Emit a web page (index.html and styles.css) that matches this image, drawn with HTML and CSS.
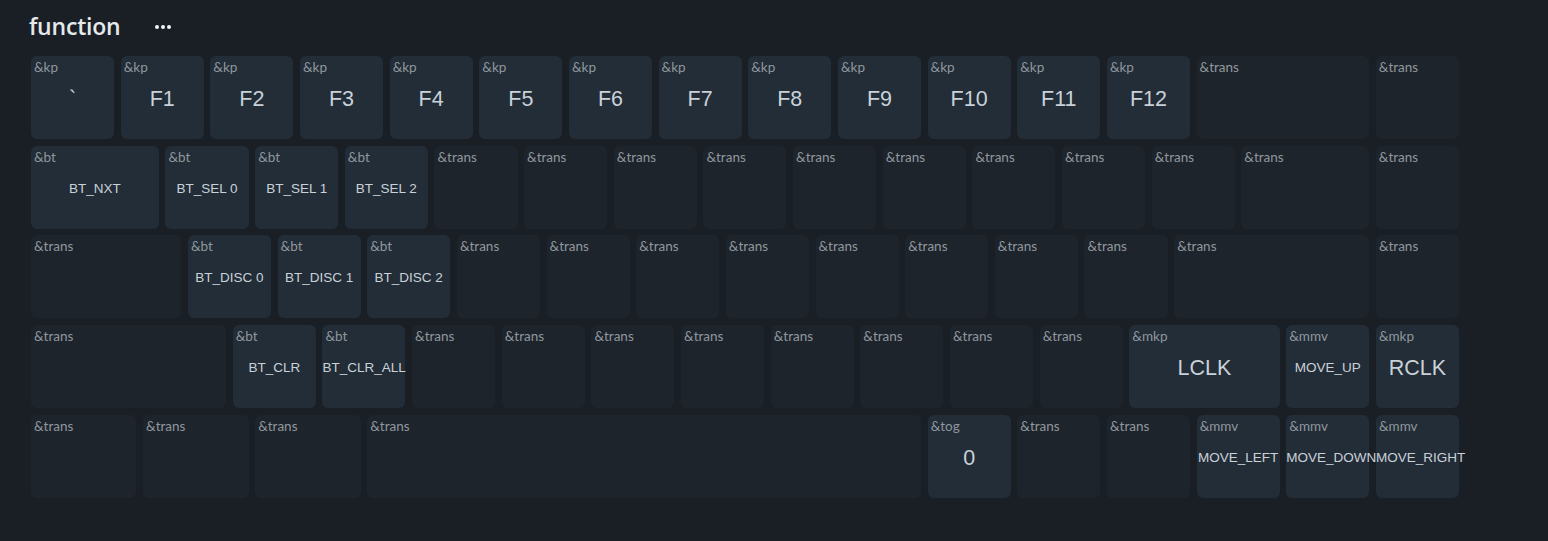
FILE: index.html
```html
<!DOCTYPE html>
<html>
<head>
<meta charset="utf-8">
<link rel="stylesheet" href="styles.css">
</head>
<body>
<div class="page">
  <div class="header">
    <h1 class="title">function</h1>
    <span class="more"><i></i><i></i><i></i></span>
  </div>
  <div class="keyboard">
    <div class="row">
      <div class="key on u1"><span class="beh">&amp;kp</span><span class="lbl big">`</span></div>
      <div class="key on u1"><span class="beh">&amp;kp</span><span class="lbl big">F1</span></div>
      <div class="key on u1"><span class="beh">&amp;kp</span><span class="lbl big">F2</span></div>
      <div class="key on u1"><span class="beh">&amp;kp</span><span class="lbl big">F3</span></div>
      <div class="key on u1"><span class="beh">&amp;kp</span><span class="lbl big">F4</span></div>
      <div class="key on u1"><span class="beh">&amp;kp</span><span class="lbl big">F5</span></div>
      <div class="key on u1"><span class="beh">&amp;kp</span><span class="lbl big">F6</span></div>
      <div class="key on u1"><span class="beh">&amp;kp</span><span class="lbl big">F7</span></div>
      <div class="key on u1"><span class="beh">&amp;kp</span><span class="lbl big">F8</span></div>
      <div class="key on u1"><span class="beh">&amp;kp</span><span class="lbl big">F9</span></div>
      <div class="key on u1"><span class="beh">&amp;kp</span><span class="lbl big">F10</span></div>
      <div class="key on u1"><span class="beh">&amp;kp</span><span class="lbl big">F11</span></div>
      <div class="key on u1"><span class="beh">&amp;kp</span><span class="lbl big">F12</span></div>
      <div class="key u2"><span class="beh">&amp;trans</span></div>
      <div class="key u1"><span class="beh">&amp;trans</span></div>
    </div>
    <div class="row">
      <div class="key on u15"><span class="beh">&amp;bt</span><span class="lbl">BT_NXT</span></div>
      <div class="key on u1"><span class="beh">&amp;bt</span><span class="lbl">BT_SEL 0</span></div>
      <div class="key on u1"><span class="beh">&amp;bt</span><span class="lbl">BT_SEL 1</span></div>
      <div class="key on u1"><span class="beh">&amp;bt</span><span class="lbl">BT_SEL 2</span></div>
      <div class="key u1"><span class="beh">&amp;trans</span></div>
      <div class="key u1"><span class="beh">&amp;trans</span></div>
      <div class="key u1"><span class="beh">&amp;trans</span></div>
      <div class="key u1"><span class="beh">&amp;trans</span></div>
      <div class="key u1"><span class="beh">&amp;trans</span></div>
      <div class="key u1"><span class="beh">&amp;trans</span></div>
      <div class="key u1"><span class="beh">&amp;trans</span></div>
      <div class="key u1"><span class="beh">&amp;trans</span></div>
      <div class="key u1"><span class="beh">&amp;trans</span></div>
      <div class="key u15"><span class="beh">&amp;trans</span></div>
      <div class="key u1"><span class="beh">&amp;trans</span></div>
    </div>
    <div class="row">
      <div class="key u175"><span class="beh">&amp;trans</span></div>
      <div class="key on u1"><span class="beh">&amp;bt</span><span class="lbl">BT_DISC 0</span></div>
      <div class="key on u1"><span class="beh">&amp;bt</span><span class="lbl">BT_DISC 1</span></div>
      <div class="key on u1"><span class="beh">&amp;bt</span><span class="lbl">BT_DISC 2</span></div>
      <div class="key u1"><span class="beh">&amp;trans</span></div>
      <div class="key u1"><span class="beh">&amp;trans</span></div>
      <div class="key u1"><span class="beh">&amp;trans</span></div>
      <div class="key u1"><span class="beh">&amp;trans</span></div>
      <div class="key u1"><span class="beh">&amp;trans</span></div>
      <div class="key u1"><span class="beh">&amp;trans</span></div>
      <div class="key u1"><span class="beh">&amp;trans</span></div>
      <div class="key u1"><span class="beh">&amp;trans</span></div>
      <div class="key u225"><span class="beh">&amp;trans</span></div>
      <div class="key u1"><span class="beh">&amp;trans</span></div>
    </div>
    <div class="row">
      <div class="key u225"><span class="beh">&amp;trans</span></div>
      <div class="key on u1"><span class="beh">&amp;bt</span><span class="lbl">BT_CLR</span></div>
      <div class="key on u1"><span class="beh">&amp;bt</span><span class="lbl">BT_CLR_ALL</span></div>
      <div class="key u1"><span class="beh">&amp;trans</span></div>
      <div class="key u1"><span class="beh">&amp;trans</span></div>
      <div class="key u1"><span class="beh">&amp;trans</span></div>
      <div class="key u1"><span class="beh">&amp;trans</span></div>
      <div class="key u1"><span class="beh">&amp;trans</span></div>
      <div class="key u1"><span class="beh">&amp;trans</span></div>
      <div class="key u1"><span class="beh">&amp;trans</span></div>
      <div class="key u1"><span class="beh">&amp;trans</span></div>
      <div class="key on u175"><span class="beh">&amp;mkp</span><span class="lbl big">LCLK</span></div>
      <div class="key on u1"><span class="beh">&amp;mmv</span><span class="lbl">MOVE_UP</span></div>
      <div class="key on u1"><span class="beh">&amp;mkp</span><span class="lbl big">RCLK</span></div>
    </div>
    <div class="row">
      <div class="key u125"><span class="beh">&amp;trans</span></div>
      <div class="key u125"><span class="beh">&amp;trans</span></div>
      <div class="key u125"><span class="beh">&amp;trans</span></div>
      <div class="key u625"><span class="beh">&amp;trans</span></div>
      <div class="key on u1"><span class="beh">&amp;tog</span><span class="lbl big">0</span></div>
      <div class="key u1"><span class="beh">&amp;trans</span></div>
      <div class="key u1"><span class="beh">&amp;trans</span></div>
      <div class="key on u1"><span class="beh">&amp;mmv</span><span class="lbl">MOVE_LEFT</span></div>
      <div class="key on u1"><span class="beh">&amp;mmv</span><span class="lbl">MOVE_DOWN</span></div>
      <div class="key on u1"><span class="beh">&amp;mmv</span><span class="lbl">MOVE_RIGHT</span></div>
    </div>
  </div>
</div>
</body>
</html>
```
FILE: styles.css
```css
html, body {
  margin: 0;
  padding: 0;
  background: #1a1f26;
}
body {
  font-family: "Lato", "Noto Sans", sans-serif;
  color: #c9d1d9;
}
.page {
  padding: 8px 0 0 31px;
}
.header {
  display: flex;
  align-items: center;
  height: 36px;
  margin-bottom: 12px;
}
.title {
  margin: 0 0 0 -2px;
  font-family: "Open Sans", "Lato", sans-serif;
  font-weight: 600;
  font-size: 23px;
  letter-spacing: -0.2px;
  color: #e6e9ec;
  line-height: 36px;
}
.more {
  display: flex;
  gap: 2px;
  margin-left: 34px;
  margin-top: 2px;
}
.more i {
  display: block;
  width: 4px;
  height: 4px;
  border-radius: 50%;
  background: #f2f4f6;
}
.keyboard {
  display: flex;
  flex-direction: column;
  gap: 6.7px;
}
.row {
  display: flex;
  gap: 6.6px;
}
.key {
  --u: 1;
  width: calc(var(--u) * 89.67px - 6.6px);
  height: 83px;
  flex: none;
  box-sizing: border-box;
  border-radius: 6px;
  background: #1e242b;
  display: grid;
  grid-template: 1fr / 1fr;
  padding: 3px 0 0 3px;
}
.key.on {
  background: #222d37;
}
.u1 { --u: 1; }
.u125 { --u: 1.25; }
.u15 { --u: 1.5; }
.u175 { --u: 1.75; }
.u2 { --u: 2; }
.u225 { --u: 2.25; }
.u625 { --u: 6.25; }
.beh {
  grid-area: 1 / 1;
  align-self: start;
  justify-self: start;
  font-size: 13.5px;
  line-height: 16px;
  color: #90979e;
}
.lbl {
  grid-area: 1 / 1;
  align-self: center;
  margin: 0 0 0 -3px;
  text-align: center;
  white-space: nowrap;
  font-family: "Liberation Sans", Arial, sans-serif;
  font-size: 13.5px;
  line-height: 18px;
  color: #c9d1d9;
}
.lbl.big {
  font-size: 21.5px;
  line-height: 26px;
}
```
